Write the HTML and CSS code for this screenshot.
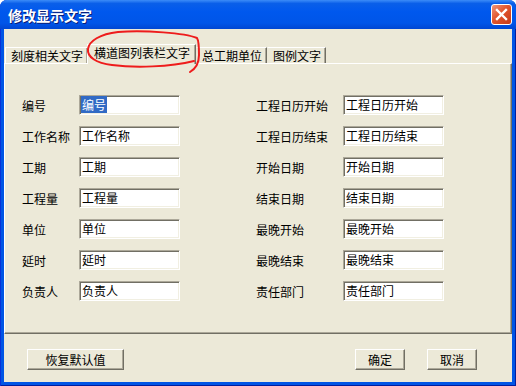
FILE: index.html
```html
<!DOCTYPE html>
<html lang="zh-CN">
<head>
  <meta charset="UTF-8" />
  <title>修改显示文字</title>
  <link rel="stylesheet" href="styles.css">
</head>
<body>

  <div class="window">
    <div class="titlebar">
      <span class="title">修改显示文字</span>
      <span class="close">
        <svg width="13" height="13" viewBox="0 0 13 13">
          <path d="M2 2 L11 11 M11 2 L2 11" stroke="#fff" stroke-width="2.4" stroke-linecap="square" fill="none"/>
        </svg>
      </span>
    </div>

    <div class="client">
      <div class="tabs">
        <span class="tab">刻度相关文字</span>
        <span class="tab active">横道图列表栏文字</span>
        <span class="tab">总工期单位</span>
        <span class="tab">图例文字</span>
      </div>

      <div class="panel">
        <div class="fields">
          <div class="col">
            <div class="row"><label>编号</label><div class="edit"><span class="sel">编号</span></div></div>
            <div class="row"><label>工作名称</label><div class="edit">工作名称</div></div>
            <div class="row"><label>工期</label><div class="edit">工期</div></div>
            <div class="row"><label>工程量</label><div class="edit">工程量</div></div>
            <div class="row"><label>单位</label><div class="edit">单位</div></div>
            <div class="row"><label>延时</label><div class="edit">延时</div></div>
            <div class="row"><label>负责人</label><div class="edit">负责人</div></div>
          </div>
          <div class="col right">
            <div class="row"><label>工程日历开始</label><div class="edit">工程日历开始</div></div>
            <div class="row"><label>工程日历结束</label><div class="edit">工程日历结束</div></div>
            <div class="row"><label>开始日期</label><div class="edit">开始日期</div></div>
            <div class="row"><label>结束日期</label><div class="edit">结束日期</div></div>
            <div class="row"><label>最晚开始</label><div class="edit">最晚开始</div></div>
            <div class="row"><label>最晚结束</label><div class="edit">最晚结束</div></div>
            <div class="row"><label>责任部门</label><div class="edit">责任部门</div></div>
          </div>
        </div>
      </div>

      <div class="actions">
        <button class="btn wide">恢复默认值</button>
        <button class="btn ok">确定</button>
        <button class="btn">取消</button>
      </div>
    </div>

    <!-- red hand-drawn mark around the active tab -->
    <svg class="mark" width="516" height="386" viewBox="0 0 516 386">
      <path d="M190 72 C195 69, 199 64, 199 55 C199 47, 199 41, 197 38 C185 33, 145 30, 118 32 C100 34, 89 41, 88 49 C87 57, 96 63, 112 65 C135 68, 170 67, 194 61"
            stroke="#ee1c1c" stroke-width="2" fill="none" stroke-linecap="round" stroke-linejoin="round"/>
    </svg>
  </div>

</body>
</html>
```

FILE: styles.css
```css
body {
  margin: 0;
  background: #fff;
  font-family: "SimSun", "Noto Sans CJK SC", sans-serif;
  font-size: 12px;
  color: #000;
}

.window {
  position: relative;
  width: 516px;
  height: 386px;
  box-sizing: border-box;
  padding: 0 4px 4px;
  display: flex;
  flex-direction: column;
  background: #0055e5;
  border-radius: 7px 7px 0 0;
  box-shadow: inset 1px 0 #0831d9, inset -1px -1px #001ea0;
}

.titlebar {
  height: 29px;
  margin: 0 -4px;
  padding: 0 4px 0 8px;
  display: flex;
  align-items: center;
  border-radius: 7px 7px 0 0;
  background: linear-gradient(to bottom, #3c8cf8 0%, #0a5fe9 12%, #0058ee 40%, #0055e8 80%, #0046d2 100%);
}

.title {
  flex: 1;
  color: #fff;
  font-size: 14px;
  font-weight: bold;
  text-shadow: 1px 1px #0a1e78;
}

.close {
  width: 21px;
  height: 21px;
  box-sizing: border-box;
  margin-right: 0;
  display: flex;
  align-items: center;
  justify-content: center;
  border: 1px solid #fff;
  border-radius: 3px;
  background: linear-gradient(135deg, #f0967a 0%, #e1552d 45%, #c73a1a 100%);
}

.client {
  flex: 1;
  background: #ece9d8;
  padding-top: 15px;
  display: flex;
  flex-direction: column;
}

.tabs {
  display: flex;
  align-items: flex-end;
  height: 19px;
  padding-left: 1px;
}

.tab {
  height: 16px;
  box-sizing: border-box;
  padding: 0 4px 0 5px;
  line-height: 15px;
  border-top: 1px solid #fff;
  border-left: 1px solid #fff;
  border-right: 1px solid #716f64;
  box-shadow: inset -1px 0 #aca899;
  white-space: nowrap;
}

.tab + .tab {
  border-left-color: #ece9d8;
}

.tab.active {
  position: relative;
  z-index: 1;
  height: 20px;
  margin: 0 0 -1px -1px;
  padding: 0 5px 0 6px;
  line-height: 16px;
  border-left-color: #fff;
  background: #ece9d8;
}

.panel {
  height: 271px;
  box-sizing: border-box;
  padding: 31px 0 0 17px;
  border-top: 1px solid #fff;
  border-left: 1px solid #fff;
  border-right: 1px solid #716f64;
  border-bottom: 1px solid #716f64;
  box-shadow: inset -1px -1px #aca899;
}

.fields {
  display: flex;
  gap: 76px;
}

.col {
  display: flex;
  flex-direction: column;
  gap: 11px;
}

.row {
  display: flex;
  align-items: center;
}

.row label {
  width: 57px;
}

.col.right .row label {
  width: 87px;
}

.edit {
  width: 101px;
  height: 20px;
  box-sizing: border-box;
  padding-left: 2px;
  line-height: 18px;
  background: #fff;
  border: 1px solid;
  border-color: #aca899 #fff #fff #aca899;
  box-shadow: inset 1px 1px #716f64, inset -1px -1px #f1efe2;
  white-space: nowrap;
}

.sel {
  margin-left: -1px;
  padding: 0 1px;
  background: #316ac5;
  color: #fff;
}

.actions {
  display: flex;
  align-items: center;
  padding: 15px 35px 0 23px;
}

.btn {
  width: 50px;
  height: 21px;
  padding: 0;
  font: inherit;
  color: #000;
  background: #ece9d8;
  border: 1px solid;
  border-color: #fff #716f64 #716f64 #fff;
  box-shadow: inset -1px -1px #aca899;
}

.btn.wide {
  width: 97px;
}

.btn.ok {
  margin-left: auto;
  margin-right: 22px;
}

.mark {
  position: absolute;
  left: 0;
  top: 0;
  pointer-events: none;
  z-index: 5;
}
```
